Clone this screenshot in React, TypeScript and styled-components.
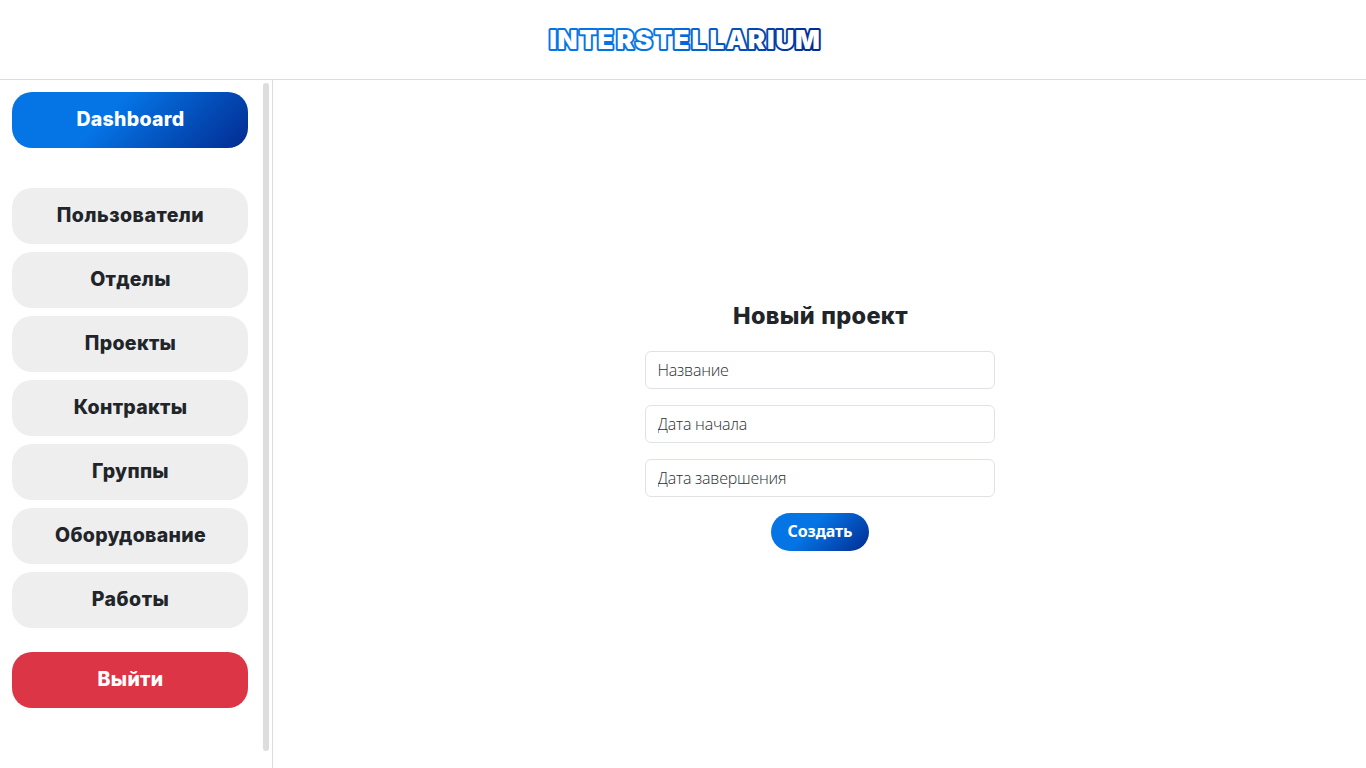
import React from "react";
import styled, { createGlobalStyle, css } from "styled-components";

const GlobalStyle = createGlobalStyle`
  *, *::before, *::after { box-sizing: border-box; }
  body { margin: 0; background: #fff; color: #212529; font-family: "Noto Sans", sans-serif; overflow: hidden; }
`;

const brandGradient = css`
  background: linear-gradient(135deg, #0575e6 40%, #022b91 100%);
`;

const Page = styled.div`
  display: flex;
  flex-direction: column;
  height: 100vh;
`;

const Header = styled.header`
  flex: none;
  display: flex;
  justify-content: center;
  align-items: center;
  height: 80px;
  border-bottom: 1px solid #ddd;
`;

const Body = styled.div`
  flex: 1;
  display: flex;
  min-height: 0;
`;

const Sidebar = styled.aside`
  flex: none;
  display: flex;
  width: 273px;
  border-right: 1px solid #ddd;
`;

const Nav = styled.nav`
  display: flex;
  flex-direction: column;
  gap: 8px;
  width: 260px;
  padding: 12px;
`;

const NavButton = styled.a<{ $variant?: "primary" | "danger"; $spacing?: number }>`
  display: flex;
  flex: none;
  justify-content: center;
  align-items: center;
  height: 56px;
  padding: 0 0 2px 1px;
  border-radius: 20px;
  font: 800 19.5px/30px Inter, sans-serif;
  letter-spacing: ${(p) => p.$spacing ?? 0.3}px;
  background: #eee;
  color: #212529;
  ${(p) => p.$variant === "primary" && css`${brandGradient} color: #fff; margin-bottom: 32px;`}
  ${(p) => p.$variant === "danger" && css`background: #dc3545; color: #fff; margin-top: 16px;`}
`;

const Track = styled.div`
  width: 12px;
  padding: 3px 3px 17px;
`;

const Thumb = styled.div`
  height: 100%;
  border-radius: 3px;
  background: #ddd;
`;

const Main = styled.main`
  flex: 1;
  display: flex;
  justify-content: center;
  align-items: center;
`;

const Form = styled.form`
  display: flex;
  flex-direction: column;
  align-items: center;
  gap: 16px;
  width: 350px;
`;

const Title = styled.h1`
  margin: 0;
  padding-left: 2px;
  height: 38px;
  font: 800 23.5px/38px Inter, sans-serif;
  letter-spacing: 0.3px;
  word-spacing: 1px;
  white-space: nowrap;
`;

const Input = styled.input`
  width: 100%;
  height: 38px;
  padding: 6px 12px;
  border: 1px solid #dee2e6;
  border-radius: 6px;
  background: #fff;
  font: 300 16px/24px "Open Sans", sans-serif;
  letter-spacing: -0.22px;
  &::placeholder { color: #212529; opacity: 0.95; }
`;

const Submit = styled.button`
  width: 98px;
  height: 38px;
  padding: 0 0 2px 1px;
  border: 0;
  border-radius: 20px;
  color: #fff;
  font: 700 16px/24px "Noto Sans", sans-serif;
  letter-spacing: -0.1px;
  white-space: nowrap;
  ${brandGradient}
`;

const items: [string, number][] = [
  ["Пользователи", 0.5],
  ["Отделы", 0.3],
  ["Проекты", 0.3],
  ["Контракты", 0.3],
  ["Группы", 0.3],
  ["Оборудование", 0.3],
  ["Работы", 0.5],
];

const Logo = () => (
  <svg width="280" height="36" viewBox="0 0 280 36" role="img">
    <defs>
      <linearGradient id="logo" gradientUnits="userSpaceOnUse" x1="5" y1="0" x2="275" y2="0">
        <stop offset="0.4" stopColor="#0575e6" />
        <stop offset="1" stopColor="#022b91" />
      </linearGradient>
    </defs>
    <text
      x="6.2 14.4 36.2 54.6 73.6 92 111.6 130.6 148.6 166.6 183.2 204.8 224 232.6 252"
      y="27"
      fontFamily="Inter, sans-serif"
      fontWeight="900"
      fontSize="26"
      fill="#fff"
      stroke="url(#logo)"
      strokeWidth="4"
      strokeLinejoin="round"
      paintOrder="stroke"
    >
      INTERSTELLARIUM
    </text>
  </svg>
);

export default function App() {
  return (
    <Page>
      <GlobalStyle />
      <Header>
        <Logo />
      </Header>
      <Body>
        <Sidebar>
          <Nav>
            <NavButton $variant="primary">Dashboard</NavButton>
            {items.map(([label, spacing]) => (
              <NavButton key={label} $spacing={spacing}>{label}</NavButton>
            ))}
            <NavButton $variant="danger">Выйти</NavButton>
          </Nav>
          <Track>
            <Thumb />
          </Track>
        </Sidebar>
        <Main>
          <Form>
            <Title>Новый проект</Title>
            <Input placeholder="Название" />
            <Input placeholder="Дата начала" />
            <Input placeholder="Дата завершения" />
            <Submit type="button">Создать</Submit>
          </Form>
        </Main>
      </Body>
    </Page>
  );
}
